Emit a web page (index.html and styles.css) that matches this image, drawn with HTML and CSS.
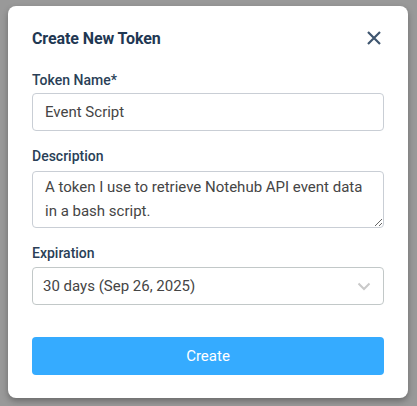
FILE: index.html
```html
<!DOCTYPE html>
<html>
<head>
<meta charset="utf-8">
<link rel="stylesheet" href="styles.css">
</head>
<body>
<div class="modal">
  <div class="header">
    <h2 class="title">Create New Token</h2>
    <svg class="close" width="14" height="14" viewBox="0 0 14 14"><path d="M1 1L13 13M13 1L1 13" stroke="#3f566f" stroke-width="2.2" fill="none"/></svg>
  </div>
  <div class="field">
    <label class="label">Token Name*</label>
    <input class="input" type="text" value="Event Script">
  </div>
  <div class="field">
    <label class="label">Description</label>
    <textarea class="textarea">A token I use to retrieve Notehub API event data in a bash script.</textarea>
  </div>
  <div class="field">
    <label class="label">Expiration</label>
    <div class="select">
      <span>30 days (Sep 26, 2025)</span>
      <svg width="14" height="9" viewBox="0 0 14 9"><path d="M1.5 1.5L7 7L12.5 1.5" stroke="#c9c9c9" stroke-width="2" fill="none"/></svg>
    </div>
  </div>
  <button class="btn">Create</button>
</div>
</body>
</html>
```
FILE: styles.css
```css
* { box-sizing: border-box; }
html, body { margin: 0; padding: 0; }
body {
  background: #999999;
  width: 417px;
  height: 406px;
  font-family: Roboto, "Liberation Sans", sans-serif;
  padding: 6px 9px 0 8px;
}
.modal {
  width: 400px;
  height: 392px;
  background: #fff;
  border-radius: 8px;
  box-shadow: 0 3px 6px rgba(0,0,0,0.3);
  padding: 20px 24px 23px 24px;
  display: flex;
  flex-direction: column;
}
.header {
  display: flex;
  align-items: center;
  justify-content: space-between;
  height: 24px;
  margin-bottom: 20px;
}
.title {
  margin: 0;
  font-size: 16px;
  font-weight: 700;
  color: #1f3853;
  letter-spacing: -0.1px;
}
.close { margin-right: 3px; }
.field {
  display: flex;
  flex-direction: column;
  margin-bottom: 15px;
}
.label {
  font-size: 14px;
  font-weight: 500;
  color: #2a3f57;
  line-height: 20px;
  margin-bottom: 3px;
}
.input {
  height: 38px;
  border: 1px solid #c9ced5;
  border-radius: 4px;
  padding: 0 12px;
  font-family: inherit;
  font-size: 15px;
  color: #454545;
  outline: none;
}
.textarea {
  display: block;
  height: 57px;
  margin-top: 2px;
  border: 1px solid #c9ced5;
  border-radius: 4px;
  padding: 3px 12px;
  font-family: inherit;
  font-size: 15px;
  line-height: 24px;
  color: #454545;
  resize: vertical;
  outline: none;
}
.select {
  height: 38px;
  margin-top: 1px;
  border: 1px solid #c2c8c8;
  border-radius: 4px;
  padding: 0 12px 0 10px;
  display: flex;
  align-items: center;
  justify-content: space-between;
  font-size: 15px;
  color: #454545;
}
.btn {
  margin-top: 17px;
  height: 38px;
  border: none;
  border-radius: 4px;
  background: #35abff;
  color: #fff;
  font-family: inherit;
  font-size: 15px;
}
```
